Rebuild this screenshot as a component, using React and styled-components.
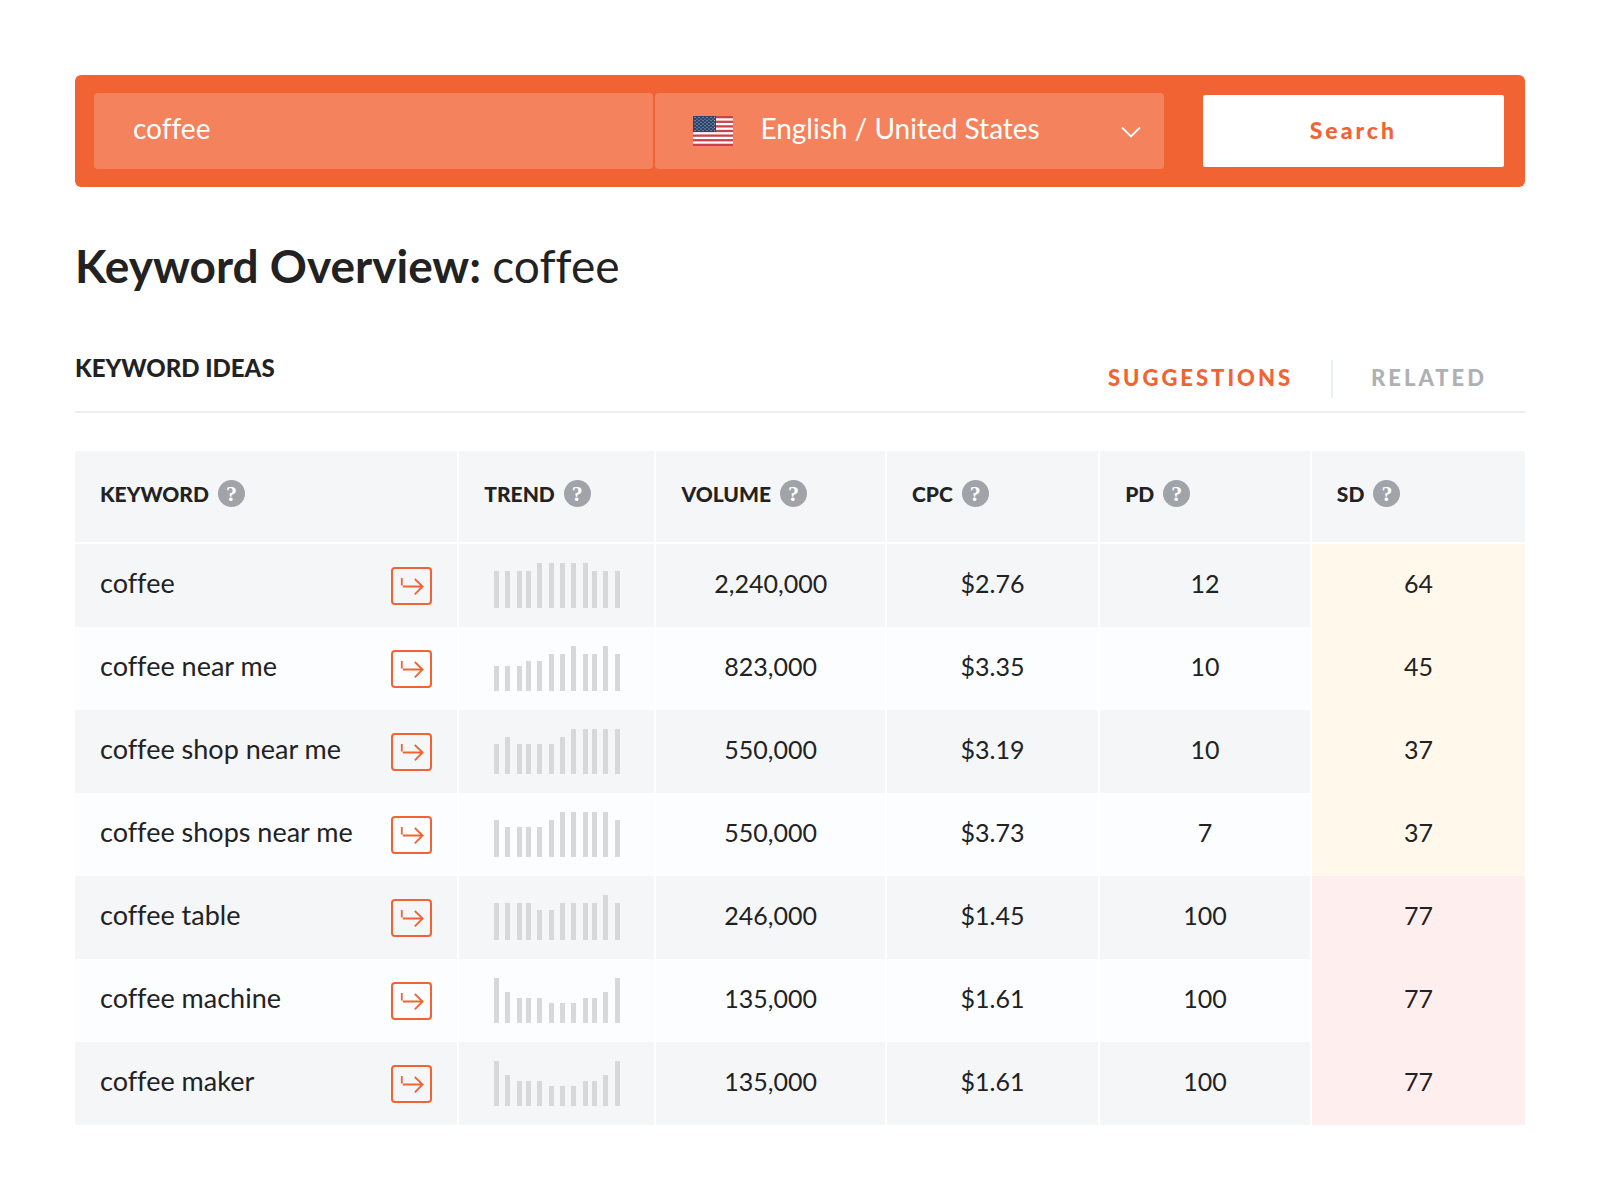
import React, { useState } from "react";
import styled, { createGlobalStyle } from "styled-components";

const ORANGE = "#f26334";
const INK = "#222222";
const RULE = "#e9eef4";

const GlobalStyle = createGlobalStyle`
  *, *::before, *::after { box-sizing: border-box; }
  body {
    margin: 0;
    background: #ffffff;
    color: ${INK};
    font-family: Lato, "Open Sans", sans-serif;
    font-variant-ligatures: none;
  }
  button, input, select {
    font-family: inherit;
    font-variant-ligatures: inherit;
  }
`;

const Page = styled.main`
  padding: 75px 75px 79px;
`;

const SearchBar = styled.form`
  display: grid;
  grid-template-columns: minmax(0, 1069fr) minmax(0, 301fr);
  gap: 39px;
  align-items: center;
  height: 112px;
  padding: 0 21px 0 19px;
  border-radius: 6px;
  background: ${ORANGE};
`;

const Fields = styled.div`
  display: grid;
  grid-template-columns: minmax(0, 559fr) minmax(0, 508fr);
  gap: 2px;
`;

const QueryInput = styled.input`
  width: 100%;
  height: 76px;
  padding: 0 39px 6px;
  border: 0;
  border-radius: 4px;
  background: rgba(255, 255, 255, 0.2);
  color: #ffffff;
  font-size: 28px;
`;

const LocaleField = styled.div`
  position: relative;
`;

const LocaleSelect = styled.select`
  display: block;
  width: 100%;
  height: 76px;
  padding: 0 60px 6px 105px;
  border: 0;
  border-radius: 4px;
  appearance: none;
  background: rgba(255, 255, 255, 0.2);
  color: #ffffff;
  font-size: 28px;
`;

const FlagIcon = styled.svg`
  position: absolute;
  left: 38px;
  top: 23px;
  pointer-events: none;
`;

const ChevronIcon = styled.svg`
  position: absolute;
  right: 23px;
  top: 33px;
  pointer-events: none;
`;

const SearchButton = styled.button`
  height: 72px;
  padding: 0 0 2px;
  border: 0;
  border-radius: 2px;
  background: #ffffff;
  color: ${ORANGE};
  font-size: 23px;
  font-weight: 900;
  letter-spacing: 3px;
`;

const Title = styled.h1`
  margin: 51px 0 0;
  font-size: 46px;
  line-height: 56px;
  font-weight: 700;
`;

const TitleTerm = styled.span`
  font-weight: 400;
`;

const SectionHead = styled.header`
  display: flex;
  justify-content: space-between;
  align-items: flex-start;
  margin-top: 54px;
  padding-bottom: 13px;
  border-bottom: 2px solid ${RULE};
`;

const SectionTitle = styled.h2`
  margin: 0;
  font-size: 24px;
  line-height: 40px;
  font-weight: 900;
`;

const Tabs = styled.nav`
  display: flex;
  padding-top: 12px;
`;

const Tab = styled.a`
  padding: 0 38px 2px;
  border-left: ${(p) => (p.$divided ? `2px solid ${RULE}` : "0")};
  color: ${(p) => (p.$active ? ORANGE : "#aeb1b4")};
  font-size: 22px;
  line-height: 36px;
  font-weight: 900;
  letter-spacing: 3px;
  text-decoration: none;
`;

const Table = styled.table`
  width: 100%;
  margin-top: 38px;
  table-layout: fixed;
  border-collapse: separate;
  border-spacing: 0;
`;

const Col = styled.col`
  width: ${(p) => p.$share}%;
`;

const HeadCell = styled.th`
  height: 93px;
  padding: 0 25px 6px;
  border-bottom: 2px solid #ffffff;
  border-right: 2px solid #ffffff;
  background: #f4f6f8;
  text-align: left;
  &:last-child { border-right: 0; }
`;

const HeadLabel = styled.div`
  display: flex;
  align-items: center;
  gap: 9px;
  font-size: 21px;
  line-height: 28px;
  font-weight: 900;
`;

const HelpBadge = styled.button`
  width: 27px;
  height: 27px;
  padding: 0;
  border: 0;
  border-radius: 50%;
  background: #a0a3a8;
  color: #ffffff;
  font-family: "Liberation Serif", serif;
  font-size: 22px;
  line-height: 26px;
  font-weight: 700;
`;

const Row = styled.tr`
  background: ${(p) => (p.$odd ? "#fbfdff" : "#f4f6f8")};
`;

const Cell = styled.td`
  height: 83px;
  padding: 0 25px;
  border-right: 2px solid #ffffff;
`;

const NumberCell = styled(Cell)`
  padding-bottom: 6px;
  font-size: 25px;
  text-align: center;
`;

const DifficultyCell = styled(NumberCell)`
  border-right: 0;
  background: ${(p) => (p.$hard ? "#ffeeee" : "#fff8eb")};
`;

const TrendCell = styled(Cell)`
  padding: 0 35px;
`;

const TrendChart = styled.svg`
  display: block;
`;

const KeywordLine = styled.div`
  display: flex;
  align-items: center;
  justify-content: space-between;
`;

const KeywordText = styled.span`
  padding-bottom: 6px;
  font-size: 27px;
  line-height: 32px;
  white-space: nowrap;
`;

const OpenButton = styled.button`
  display: flex;
  align-items: center;
  justify-content: center;
  width: 41px;
  height: 38px;
  padding: 0;
  border: 2px solid ${ORANGE};
  border-radius: 4px;
  background: transparent;
  color: ${ORANGE};
`;

const COLUMNS = [
  { label: "KEYWORD", share: 26.5 },
  { label: "TREND", share: 13.6 },
  { label: "VOLUME", share: 15.9 },
  { label: "CPC", share: 14.7 },
  { label: "PD", share: 14.6 },
  { label: "SD", share: 14.7 },
];

const SEASONAL = [45, 31, 25, 25, 25, 20, 20, 20, 25, 25, 31, 45];

const KEYWORDS = [
  { term: "coffee", volume: "2,240,000", cpc: "$2.76", pd: 12, sd: 64, trend: [37, 37, 37, 37, 45, 45, 45, 45, 45, 37, 37, 37] },
  { term: "coffee near me", volume: "823,000", cpc: "$3.35", pd: 10, sd: 45, trend: [25, 25, 25, 30, 30, 37, 37, 45, 37, 37, 45, 37] },
  { term: "coffee shop near me", volume: "550,000", cpc: "$3.19", pd: 10, sd: 37, trend: [30, 37, 30, 30, 30, 30, 37, 45, 45, 45, 45, 45] },
  { term: "coffee shops near me", volume: "550,000", cpc: "$3.73", pd: 7, sd: 37, trend: [37, 30, 30, 30, 30, 37, 45, 45, 45, 45, 45, 37] },
  { term: "coffee table", volume: "246,000", cpc: "$1.45", pd: 100, sd: 77, trend: [37, 37, 37, 37, 30, 30, 37, 37, 37, 37, 45, 37] },
  { term: "coffee machine", volume: "135,000", cpc: "$1.61", pd: 100, sd: 77, trend: SEASONAL },
  { term: "coffee maker", volume: "135,000", cpc: "$1.61", pd: 100, sd: 77, trend: SEASONAL },
];

const MONTH_X = [0, 11, 23, 32, 43, 55, 66, 77, 89, 98, 109, 121];

function Trend({ values, term }) {
  return (
    <TrendChart width="126" height="45" viewBox="0 0 126 45" role="img" aria-label={`Trend for ${term}`}>
      {values.map((v, i) => (
        <rect key={i} x={MONTH_X[i]} y={45 - v} width="5" height={v} fill="#d8d8d8" />
      ))}
    </TrendChart>
  );
}

function UsFlag() {
  const stripes = [0, 1, 2, 3, 4, 5, 6];
  const starRows = [0, 1, 2, 3, 4, 5, 6, 7, 8];
  return (
    <FlagIcon width="40" height="30" viewBox="0 0 40 30" aria-hidden="true">
      <rect width="40" height="30" fill="#ffffff" />
      {stripes.map((s) => (
        <rect key={s} y={(s * 60) / 13} width="40" height={30 / 13} fill="#c8414b" />
      ))}
      <rect width="23" height="16" fill="#2d4368" />
      {starRows.map((r) =>
        (r % 2 ? [4, 8, 12, 16, 20] : [2, 6, 10, 14, 18, 21.5]).map((x) => (
          <circle key={`${r}-${x}`} cx={x} cy={1.4 + r * 1.65} r="0.65" fill="#9fb0cc" />
        ))
      )}
    </FlagIcon>
  );
}

function OpenArrow() {
  return (
    <svg width="24" height="18" viewBox="0 0 24 18" fill="none" stroke="currentColor" strokeWidth="1.8" aria-hidden="true">
      <path d="M1.8 1v7.5M2.8 9.5H22.6M14.8 2l7.8 7.5-7.8 7.8" />
    </svg>
  );
}

export default function App() {
  const [query, setQuery] = useState("coffee");

  return (
    <>
      <GlobalStyle />
      <Page>
        <SearchBar onSubmit={(e) => e.preventDefault()}>
          <Fields>
            <QueryInput
              type="text"
              aria-label="Keyword"
              value={query}
              onChange={(e) => setQuery(e.target.value)}
            />
            <LocaleField>
              <LocaleSelect aria-label="Language and country" defaultValue="en-us">
                <option value="en-us">English / United States</option>
              </LocaleSelect>
              <UsFlag />
              <ChevronIcon width="20" height="12" viewBox="0 0 20 12" fill="none" stroke="#ffffff" strokeWidth="1.8" aria-hidden="true">
                <path d="M1 1.5l9 9 9-9" />
              </ChevronIcon>
            </LocaleField>
          </Fields>
          <SearchButton type="submit">Search</SearchButton>
        </SearchBar>

        <Title>
          Keyword Overview: <TitleTerm>coffee</TitleTerm>
        </Title>

        <SectionHead>
          <SectionTitle>KEYWORD IDEAS</SectionTitle>
          <Tabs>
            <Tab href="#suggestions" $active>SUGGESTIONS</Tab>
            <Tab href="#related" $divided>RELATED</Tab>
          </Tabs>
        </SectionHead>

        <Table>
          <colgroup>
            {COLUMNS.map((c) => (
              <Col key={c.label} $share={c.share} />
            ))}
          </colgroup>
          <thead>
            <tr>
              {COLUMNS.map((c) => (
                <HeadCell key={c.label} scope="col">
                  <HeadLabel>
                    {c.label}
                    <HelpBadge type="button" aria-label={`About ${c.label}`}>?</HelpBadge>
                  </HeadLabel>
                </HeadCell>
              ))}
            </tr>
          </thead>
          <tbody>
            {KEYWORDS.map((k, i) => (
              <Row key={k.term} $odd={i % 2 === 1}>
                <Cell>
                  <KeywordLine>
                    <KeywordText>{k.term}</KeywordText>
                    <OpenButton type="button" aria-label={`Open ${k.term}`}>
                      <OpenArrow />
                    </OpenButton>
                  </KeywordLine>
                </Cell>
                <TrendCell>
                  <Trend values={k.trend} term={k.term} />
                </TrendCell>
                <NumberCell>{k.volume}</NumberCell>
                <NumberCell>{k.cpc}</NumberCell>
                <NumberCell>{k.pd}</NumberCell>
                <DifficultyCell $hard={k.sd > 70}>{k.sd}</DifficultyCell>
              </Row>
            ))}
          </tbody>
        </Table>
      </Page>
    </>
  );
}
